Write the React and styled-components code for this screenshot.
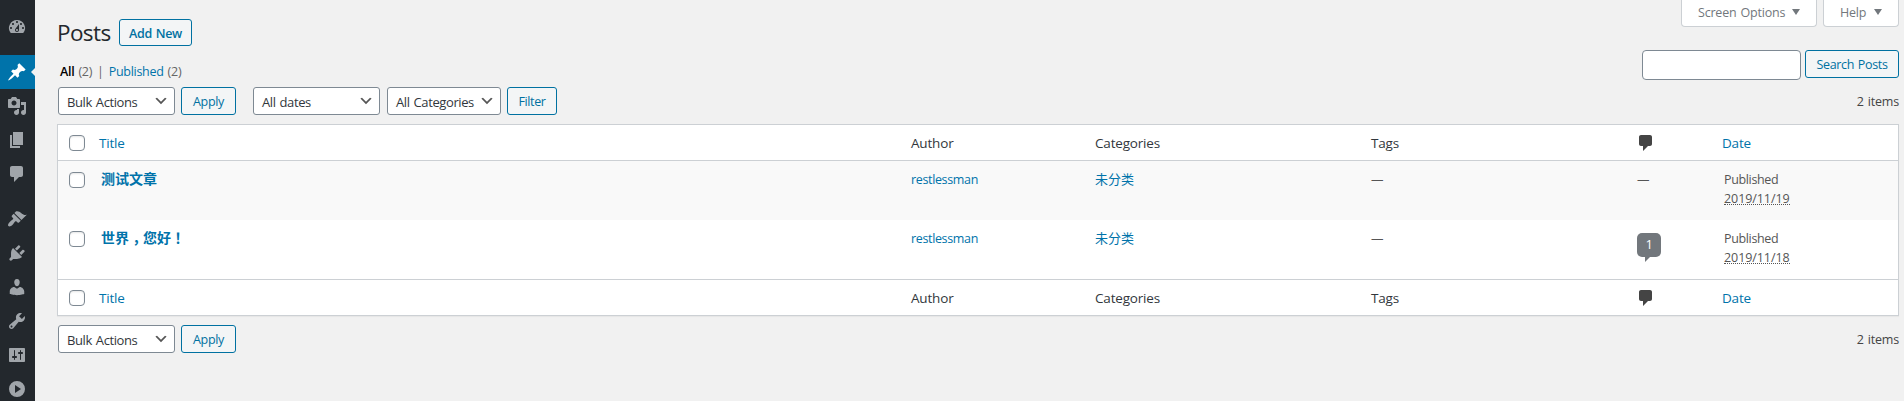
import React from "react";
import styled, { createGlobalStyle, css } from "styled-components";

const GlobalStyle = createGlobalStyle`
  *, *::before, *::after { box-sizing: border-box; }
  html, body { margin: 0; background: #f1f1f1; overflow: hidden; }
  body {
    color: #444;
    font-family: "Open Sans", "Noto Sans CJK SC", sans-serif;
    font-size: 12.5px;
    letter-spacing: -0.35px;
    word-spacing: 1px;
    line-height: 19px;
  }
  a { color: #0073aa; text-decoration: none; }
`;

const Page = styled.div`
  display: flex;
  height: 401px;
  overflow: hidden;
`;

const Sidebar = styled.nav`
  flex: none;
  width: 35px;
  padding-top: 10px;
  background: #23282d;
`;

const MenuItem = styled.a`
  display: flex;
  position: relative;
  height: 34px;
  padding: 7px 0 0 6.5px;
  margin-bottom: ${(p) => (p.$gap ? "11px" : 0)};
  background: ${(p) => (p.$current ? "#0073aa" : "transparent")};
  color: ${(p) => (p.$current ? "#fff" : "#a0a5aa")};
  ${(p) =>
    p.$current &&
    css`
      &::after {
        content: "";
        position: absolute;
        right: 0;
        top: 13px;
        border: solid transparent;
        border-width: 4px 4px 4px 0;
        border-right-color: #f1f1f1;
      }
    `}
`;

const Glyph = styled.svg`
  display: block;
  flex: none;
  width: ${(p) => p.$size || 20}px;
  height: ${(p) => p.$size || 20}px;
  fill: currentColor;
`;

const Main = styled.main`
  flex: 1;
  min-width: 0;
  padding: 0 5px 0 22px;
`;

const TopBar = styled.header`
  display: flex;
  justify-content: space-between;
  height: 50px;
`;

const Heading = styled.div`
  display: flex;
  align-items: flex-start;
  padding-top: 19px;
`;

const Title = styled.h1`
  width: 62px;
  margin: -1px 0 0;
  color: #23282d;
  font-size: 22.5px;
  font-weight: 400;
  letter-spacing: -0.6px;
  line-height: 30px;
`;

const Button = styled.button`
  flex: none;
  width: ${(p) => p.$width}px;
  height: ${(p) => p.$height || 28}px;
  padding: ${(p) => (p.$strong ? "1px 0 0" : 0)};
  border: 1px solid #0071a1;
  border-radius: 3px;
  background: #f3f5f6;
  color: #0071a1;
  font: inherit;
  font-weight: ${(p) => (p.$strong ? 600 : 400)};
  letter-spacing: inherit;
  word-spacing: inherit;
  white-space: nowrap;
`;

const ScreenMeta = styled.div`
  display: flex;
  gap: 6px;
`;

const MetaTab = styled.button`
  display: flex;
  align-items: center;
  justify-content: space-between;
  width: ${(p) => p.$width}px;
  height: 27px;
  padding: 0 16px 2px;
  border: 1px solid #ccd0d4;
  border-top: 0;
  border-radius: 0 0 4px 4px;
  background: #fff;
  color: #72777c;
  font: inherit;
  letter-spacing: -0.2px;
  word-spacing: inherit;
  white-space: nowrap;
`;

const Caret = styled.span`
  border: solid transparent;
  border-width: 6px 4px 0;
  border-top-color: #72777c;
`;

const FilterBar = styled.div`
  display: flex;
  justify-content: space-between;
  height: 37px;
`;

const StatusLinks = styled.div`
  display: flex;
  gap: 4px;
  padding: 12px 0 0 3px;
  color: #666;
  letter-spacing: -0.28px;

  b { color: #000; font-weight: 600; }
`;

const Divider = styled.span`
  margin: 0 1px;
`;

const SearchBox = styled.form`
  display: flex;
  align-items: flex-start;
  gap: 4px;
`;

const SearchInput = styled.input`
  width: 159px;
  height: 30px;
  border: 1px solid #7e8993;
  border-radius: 4px;
  background: #fff;
`;

const TableNav = styled.div`
  display: flex;
  justify-content: space-between;
  height: ${(p) => (p.$bottom ? "38px" : "37px")};
  padding-top: ${(p) => (p.$bottom ? "9px" : 0)};
  padding-left: 1px;
`;

const Actions = styled.div`
  display: flex;
  gap: 6px;
`;

const Select = styled.div`
  display: flex;
  flex: none;
  align-items: center;
  justify-content: space-between;
  width: ${(p) => p.$width}px;
  height: 28px;
  margin-left: ${(p) => p.$offset || 0}px;
  padding: 2px 4px 0 8px;
  border: 1px solid #7e8993;
  border-radius: 3px;
  background: #fff;
  color: #32373c;
  font-size: 13px;
  letter-spacing: -0.4px;
  white-space: nowrap;

  svg { color: #555; margin-right: 1px; margin-top: -2px; }
`;

const Count = styled.span`
  padding-top: 5px;
  color: #444;
  letter-spacing: -0.2px;
`;

const Table = styled.section`
  border: 1px solid #ccd0d4;
  background: #fff;
  box-shadow: 0 1px 1px rgba(0, 0, 0, 0.04);
`;

const columns = css`
  display: grid;
  grid-template-columns: 41px 812px 184px 276px 267px 84px 1fr;
`;

const LabelRow = styled.div`
  ${columns}
  height: 36px;
  padding-top: 8px;
  color: #32373c;
  font-size: 13.5px;
  letter-spacing: -0.18px;
  line-height: 20px;
  border: solid #ccd0d4;
  border-width: ${(p) => (p.$foot ? "1px 0 0" : "0 0 1px")};
`;

const PostRow = styled.div`
  ${columns}
  height: 59px;
  padding-top: 9px;
  background: ${(p) => (p.$striped ? "#f9f9f9" : "#fff")};
  color: #555;
`;

const CheckBox = styled.span`
  width: 16px;
  height: 16px;
  margin: 2px 0 0 11px;
  border: 1px solid #7e8993;
  border-radius: 4px;
  background: #fff;
  box-shadow: inset 0 1px 2px rgba(0, 0, 0, 0.1);
`;

const PostTitle = styled.a`
  margin-top: -1px;
  padding-left: 2px;
  font-size: 14px;
  font-weight: 700;
  letter-spacing: 0;
`;

const Punctuation = styled.span`
  padding: 0 3.5px;
  font-feature-settings: "halt";
`;

const Term = styled.a`
  font-size: 13px;
  letter-spacing: 0;
`;

const NoComments = styled.span`
  margin-left: -1px;
`;

const DateCell = styled.div`
  padding-left: 2px;
`;

const DateText = styled.span`
  display: block;
  width: 66px;
  height: 16px;
  border-bottom: 1px dotted #555;
  letter-spacing: -0.08px;
`;

const Bubble = styled.span`
  position: relative;
  display: block;
  width: 24px;
  height: 24px;
  margin: 4px 0 0 -1px;
  border-radius: 5px;
  background: #72777c;
  color: #fff;
  font-size: 13px;
  line-height: 23px;
  text-align: center;

  &::after {
    content: "";
    position: absolute;
    left: 8px;
    top: 24px;
    border: solid transparent;
    border-width: 5px 5px 0 0;
    border-top-color: #72777c;
  }
`;

const CommentLabel = styled.span`
  margin-left: -2px;
  color: #444;
`;

const Icon = ({ d, size }) => (
  <Glyph viewBox="0 0 20 20" $size={size} aria-hidden="true">
    <path d={d} fillRule="evenodd" />
  </Glyph>
);

const COMMENT = "M5 2h9c1.1 0 2 .9 2 2v7c0 1.1-.9 2-2 2h-2l-5 5v-5H5c-1.1 0-2-.9-2-2V4c0-1.1.9-2 2-2z";
const CHEVRON = "M5 6l5 5 5-5 2 1-7 7-7-7 2-1z";

const MENU = [
  { name: "dashboard", gap: true, d: "M3.76 16h12.48A7.998 7.998 0 0 0 10 3a7.998 7.998 0 0 0-6.24 13zM10 4c.55 0 1 .45 1 1s-.45 1-1 1-1-.45-1-1 .45-1 1-1zM6 6c.55 0 1 .45 1 1s-.45 1-1 1-1-.45-1-1 .45-1 1-1zm8 0c.55 0 1 .45 1 1s-.45 1-1 1-1-.45-1-1 .45-1 1-1zm-5.37 5.55L12 7v6c0 1.1-.9 2-2 2s-2-.9-2-2c0-.57.24-1.08.63-1.45zM4 10c.55 0 1 .45 1 1s-.45 1-1 1-1-.45-1-1 .45-1 1-1zm12 0c.55 0 1 .45 1 1s-.45 1-1 1-1-.45-1-1 .45-1 1-1zm-5 3c0-.55-.45-1-1-1s-1 .45-1 1 .45 1 1 1 1-.45 1-1z" },
  { name: "posts", current: true, d: "M10.44 3.02l1.82-1.82 6.36 6.35-1.83 1.82c-1.05-.68-2.48-.57-3.41.36l-.75.75c-.92.93-1.04 2.35-.35 3.41l-1.83 1.82-2.41-2.41-2.8 2.79c-.42.42-3.38 2.71-3.8 2.29s1.86-3.39 2.28-3.81l2.79-2.79L4.1 9.36l1.83-1.82c1.05.69 2.48.57 3.4-.36l.75-.75c.93-.92 1.05-2.35.36-3.41z" },
  { name: "media", d: "M13 11V4c0-.55-.45-1-1-1h-1.67L9 1H5L3.67 3H2c-.55 0-1 .45-1 1v7c0 .55.45 1 1 1h10c.55 0 1-.45 1-1zM7 4.5c1.38 0 2.5 1.12 2.5 2.5S8.38 9.5 7 9.5 4.5 8.38 4.5 7 5.62 4.5 7 4.5zM14 6h5v10.5c0 1.38-1.12 2.5-2.5 2.5S14 17.88 14 16.5s1.12-2.5 2.5-2.5c.17 0 .34.02.5.05V9h-3V6zm-4 8.05V13h2v3.5c0 1.38-1.12 2.5-2.5 2.5S7 17.88 7 16.5 8.12 14 9.5 14c.17 0 .34.02.5.05z" },
  { name: "pages", d: "M6 15V2h10v13H6zm-1 1h8v2H3V5h2v11z" },
  { name: "comments", gap: true, d: COMMENT },
  { name: "appearance", d: "M14.48 11.06L7.41 3.99l1.5-1.5c.5-.56 2.3-.47 3.51.32 1.21.8 1.43 1.28 2.91 2.1 1.18.64 2.45 1.26 4.45.85zm-.71.71L6.7 4.7 4.93 6.47c-.39.39-.39 1.02 0 1.41l1.06 1.06c.39.39.39 1.03 0 1.42-.6.6-1.43 1.11-2.21 1.69-.35.26-.7.53-1.01.84C1.43 14.23.4 16.08 1.4 17.07c.99 1 2.84-.03 4.18-1.36.31-.31.58-.66.85-1.02.57-.78 1.08-1.61 1.69-2.21.39-.39 1.02-.39 1.41 0l1.06 1.06c.39.39 1.02.39 1.41 0z" },
  { name: "plugins", d: "M13.11 4.36L9.87 7.6 8 5.73l3.24-3.24c.35-.34 1.05-.2 1.56.32.52.51.66 1.21.31 1.55zm-8 1.77l.91-1.12 9.01 9.01-1.19.84c-.71.71-2.63 1.16-3.82 1.16H6.14L4.9 17.26c-.59.59-1.54.59-2.12 0-.59-.58-.59-1.53 0-2.12l1.24-1.24v-3.88c0-1.13.4-3.19 1.09-3.89zm7.26 3.97l3.24-3.24c.34-.35 1.04-.21 1.55.31.52.51.66 1.21.31 1.55l-3.24 3.25z" },
  { name: "users", d: "M10 9.25c-2.27 0-2.73-3.44-2.73-3.44C7 4.02 7.82 2 9.97 2c2.16 0 2.98 2.02 2.71 3.81 0 0-.41 3.44-2.68 3.44zm0 2.57L12.72 10c2.39 0 4.52 2.33 4.52 4.53v2.49s-3.65 1.13-7.24 1.13c-3.65 0-7.24-1.13-7.24-1.13v-2.49c0-2.25 1.94-4.48 4.47-4.48z" },
  { name: "tools", d: "M16.68 9.77c-1.34 1.34-3.3 1.67-4.95.99l-5.41 6.52c-.99.99-2.59.99-3.58 0s-.99-2.59 0-3.57l6.52-5.42c-.68-1.65-.35-3.61.99-4.95 1.28-1.28 3.12-1.62 4.72-1.06l-2.89 2.89 2.82 2.82 2.86-2.87c.53 1.58.18 3.39-1.08 4.65zM3.81 16.21c.4.39 1.04.39 1.43 0 .4-.4.4-1.04 0-1.43-.39-.4-1.03-.4-1.43 0-.39.39-.39 1.03 0 1.43z" },
  { name: "settings", d: "M18 16V4c0-.55-.45-1-1-1H3c-.55 0-1 .45-1 1v12c0 .55.45 1 1 1h14c.55 0 1-.45 1-1zM8 11h1c.55 0 1 .45 1 1s-.45 1-1 1H8v1.5c0 .28-.22.5-.5.5s-.5-.22-.5-.5V13H6c-.55 0-1-.45-1-1s.45-1 1-1h1V5.5c0-.28.22-.5.5-.5s.5.22.5.5V11zm5-2h-1c-.55 0-1-.45-1-1s.45-1 1-1h1V5.5c0-.28.22-.5.5-.5s.5.22.5.5V7h1c.55 0 1 .45 1 1s-.45 1-1 1h-1v5.5c0 .28-.22.5-.5.5s-.5-.22-.5-.5V9z" },
  { name: "collapse", d: "M10 2a8 8 0 1 0 0 16 8 8 0 0 0 0-16zM8 6l6 4-6 4z" },
];

const POSTS = [
  { title: "测试文章", author: "restlessman", category: "未分类", comments: 0, date: "2019/11/19" },
  { title: "世界，您好！", author: "restlessman", category: "未分类", comments: 1, date: "2019/11/18" },
];

// Full-width punctuation sits in the middle of its em box.
const centerPunctuation = (text) =>
  text
    .split(/([，！])/)
    .map((part, i) => (i % 2 ? <Punctuation key={i}>{part}</Punctuation> : part));

const Dropdown = ({ label, ...rest }) => (
  <Select {...rest}>
    {label}
    <Icon d={CHEVRON} size={16} />
  </Select>
);

const ColumnLabels = ({ foot }) => (
  <LabelRow $foot={foot}>
    <CheckBox />
    <a>Title</a>
    <span>Author</span>
    <span>Categories</span>
    <span>Tags</span>
    <CommentLabel>
      <Icon d={COMMENT} />
    </CommentLabel>
    <a>Date</a>
  </LabelRow>
);

const BulkActions = () => (
  <>
    <Dropdown label="Bulk Actions" $width={117} />
    <Button $width={55}>Apply</Button>
  </>
);

export default function App() {
  return (
    <Page>
      <GlobalStyle />
      <Sidebar>
        {MENU.map((m) => (
          <MenuItem key={m.name} $gap={m.gap} $current={m.current}>
            <Icon d={m.d} />
          </MenuItem>
        ))}
      </Sidebar>
      <Main>
        <TopBar>
          <Heading>
            <Title>Posts</Title>
            <Button $width={73} $height={27} $strong>Add New</Button>
          </Heading>
          <ScreenMeta>
            <MetaTab $width={136}>Screen Options<Caret /></MetaTab>
            <MetaTab $width={76}>Help<Caret /></MetaTab>
          </ScreenMeta>
        </TopBar>
        <FilterBar>
          <StatusLinks>
            <b>All</b>
            <span>(2)</span>
            <Divider>|</Divider>
            <a>Published</a>
            <span>(2)</span>
          </StatusLinks>
          <SearchBox>
            <SearchInput />
            <Button type="button" $width={94}>Search Posts</Button>
          </SearchBox>
        </FilterBar>
        <TableNav>
          <Actions>
            <BulkActions />
            <Dropdown label="All dates" $width={127} $offset={11} />
            <Dropdown label="All Categories" $width={114} $offset={1} />
            <Button $width={50}>Filter</Button>
          </Actions>
          <Count>2 items</Count>
        </TableNav>
        <Table>
          <ColumnLabels />
          {POSTS.map((post, i) => (
            <PostRow key={post.date} $striped={i % 2 === 0}>
              <CheckBox />
              <PostTitle>{centerPunctuation(post.title)}</PostTitle>
              <a>{post.author}</a>
              <Term>{post.category}</Term>
              <span>—</span>
              {post.comments ? <Bubble>{post.comments}</Bubble> : <NoComments>—</NoComments>}
              <DateCell>
                Published
                <DateText>{post.date}</DateText>
              </DateCell>
            </PostRow>
          ))}
          <ColumnLabels foot />
        </Table>
        <TableNav $bottom>
          <Actions>
            <BulkActions />
          </Actions>
          <Count>2 items</Count>
        </TableNav>
      </Main>
    </Page>
  );
}
